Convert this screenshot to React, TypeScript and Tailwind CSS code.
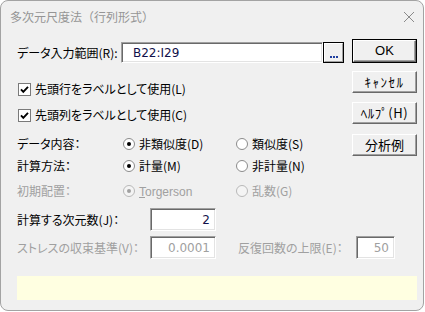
import React from "react";

const F = "font-['Noto_Sans_CJK_JP',sans-serif] [font-feature-settings:'palt']";

function ClassicButton({ label, isDefault, className }: { label: React.ReactNode; isDefault?: boolean; className?: string }) {
  const inner = (
    <div className="w-full h-full flex items-center justify-center bg-[#f0f0f0] border border-t-white border-l-white border-r-[#696969] border-b-[#696969] shadow-[inset_-1px_-1px_0_#a0a0a0] text-[13px] leading-[16px] text-black whitespace-nowrap [font-feature-settings:normal]">
      {label}
    </div>
  );
  if (isDefault) {
    return <div className={`border border-black ${className ?? ""}`}>{inner}</div>;
  }
  return <div className={className}>{inner}</div>;
}

function SunkenInput({ value, className, disabled, align }: { value: string; className?: string; disabled?: boolean; align?: "left" | "right" }) {
  return (
    <div
      className={`shrink-0 bg-white border border-t-[#a0a0a0] border-l-[#a0a0a0] border-r-white border-b-white shadow-[inset_1px_1px_0_#696969,inset_-1px_-1px_0_#e3e3e3] flex items-center font-['DejaVu_Sans',sans-serif] text-[12px] leading-[16px] ${
        align === "right" ? "justify-end pr-[5px]" : "justify-start pl-[11px]"
      } ${disabled ? "text-[#a0a0a0]" : "text-[#10104a]"} ${className ?? ""}`}
    >
      {value}
    </div>
  );
}

function Checkbox({ label }: { label: string }) {
  return (
    <div className="flex items-center h-[20px]">
      <svg width="13" height="13" viewBox="0 0 13 13" className="shrink-0 ml-[1px]">
        <rect x="0.5" y="0.5" width="12" height="12" fill="white" stroke="#7a7a7a" />
        <path d="M3 6.3 L5.3 8.8 L10 3.8" fill="none" stroke="black" strokeWidth="1.9" />
      </svg>
      <span className="ml-[4px] text-[12px] leading-[16px] text-black whitespace-nowrap">{label}</span>
    </div>
  );
}

function Radio({ label, checked, disabled, className }: { label: React.ReactNode; checked?: boolean; disabled?: boolean; className?: string }) {
  return (
    <div className={`flex items-center shrink-0 ${className ?? ""}`}>
      <svg width="12" height="12" viewBox="0 0 12 12" className="shrink-0">
        <circle cx="6" cy="6" r="5.5" fill={disabled ? "#f4f4f4" : "white"} stroke={disabled ? "#b8b8b8" : "#8a8a8a"} />
        {checked && <circle cx="6" cy="6" r="2" fill={disabled ? "#a0a0a0" : "black"} />}
      </svg>
      <span className={`ml-[4px] text-[12px] leading-[16px] whitespace-nowrap ${disabled ? "text-[#a0a0a0]" : "text-black"}`}>{label}</span>
    </div>
  );
}

export default function App() {
  return (
    <div className={`w-[425px] h-[312px] bg-white ${F}`}>
      <div className="w-[424px] h-[311px] rounded-[8px] border border-[#a3a3a3] bg-[#f0f0f0] flex flex-col overflow-hidden">
        {/* Title bar */}
        <div className="h-[29px] flex items-center justify-between pl-[9px] pr-[8px] shrink-0">
          <span className="text-[12px] leading-[16px] text-[#959595] mt-[2px] [font-feature-settings:normal]">多次元尺度法（行列形式）</span>
          <svg width="12" height="12" viewBox="0 0 12 12" className="mt-[2px]">
            <path d="M1 1 L11 11 M11 1 L1 11" stroke="#8a8a8a" strokeWidth="1" />
          </svg>
        </div>

        {/* Body */}
        <div className="flex flex-col pl-[16px] pr-[6px] pt-[9px]">
          <div className="flex justify-between">
            {/* Left column */}
            <div className="flex flex-col pt-[3px] w-[327px] shrink-0">
              <div className="flex items-center h-[21px]">
                <span className="w-[104px] shrink-0 text-[12px] leading-[16px] text-black whitespace-nowrap">データ入力範囲(R):</span>
                <SunkenInput value="B22:I29" className="w-[202px] h-[21px]" />
                <div className="w-[21px] h-[21px] shrink-0 border border-black">
                  <div className="w-full h-full bg-[#f0f0f0] border border-t-white border-l-white border-r-[#a0a0a0] border-b-[#a0a0a0] flex items-end justify-center pb-[3px]">
                    <div className="flex gap-[1px]">
                      <div className="w-[2px] h-[2px] bg-[#1f3fa0]" />
                      <div className="w-[2px] h-[2px] bg-[#1f3fa0]" />
                      <div className="w-[2px] h-[2px] bg-[#1f3fa0]" />
                    </div>
                  </div>
                </div>
              </div>

              <div className="mt-[16px]">
                <Checkbox label="先頭行をラベルとして使用(L)" />
              </div>
              <div className="mt-[6px]">
                <Checkbox label="先頭列をラベルとして使用(C)" />
              </div>

              <div className="flex items-center h-[22px] mt-[8px]">
                <span className="w-[106px] shrink-0 text-[12px] leading-[16px] text-black">データ内容：</span>
                <Radio label="非類似度(D)" checked className="w-[113px]" />
                <Radio label="類似度(S)" />
              </div>
              <div className="flex items-center h-[22px]">
                <span className="w-[106px] shrink-0 text-[12px] leading-[16px] text-black">計算方法：</span>
                <Radio label="計量(M)" checked className="w-[113px]" />
                <Radio label="非計量(N)" />
              </div>
              <div className="flex items-center h-[22px] mt-[3px]">
                <span className="w-[106px] shrink-0 text-[12px] leading-[16px] text-[#a0a0a0]">初期配置：</span>
                <Radio
                  label={
                    <span className="font-['Liberation_Sans',sans-serif]">
                      <span className="underline">T</span>orgerson
                    </span>
                  }
                  checked
                  disabled
                  className="w-[113px]"
                />
                <Radio label="乱数(G)" disabled />
              </div>

              <div className="flex items-center h-[23px] mt-[6px]">
                <span className="w-[133px] shrink-0 text-[12px] leading-[16px] text-black whitespace-nowrap">計算する次元数(J)：</span>
                <SunkenInput value="2" align="right" className="w-[66px] h-[23px]" />
              </div>
              <div className="flex items-center h-[23px] mt-[5px]">
                <span className="w-[133px] shrink-0 text-[12px] leading-[16px] text-[#a0a0a0] whitespace-nowrap">ストレスの収束基準(V)：</span>
                <SunkenInput value="0.0001" align="right" disabled className="w-[66px] h-[23px]" />
                <span className="ml-[22px] w-[118px] shrink-0 text-[12px] leading-[16px] text-[#a0a0a0] whitespace-nowrap">反復回数の上限(E)：</span>
                <SunkenInput value="50" align="right" disabled className="w-[39px] h-[23px]" />
              </div>
            </div>

            {/* Right buttons */}
            <div className="flex flex-col w-[65px] shrink-0">
              <ClassicButton label={<span className="font-['Liberation_Sans',sans-serif]">OK</span>} isDefault className="h-[24px]" />
              <ClassicButton label={<span className="tracking-[1.5px]">ｷｬﾝｾﾙ</span>} className="h-[22px] mt-[8px]" />
              <ClassicButton label={<span className="tracking-[0.5px]">ﾍﾙﾌﾟ(H)</span>} className="h-[22px] mt-[9px]" />
              <ClassicButton label="分析例" className="h-[22px] mt-[10px]" />
            </div>
          </div>

          <div className="mt-[17px] h-[24px] bg-[#ffffe1]" />
        </div>
      </div>
    </div>
  );
}
